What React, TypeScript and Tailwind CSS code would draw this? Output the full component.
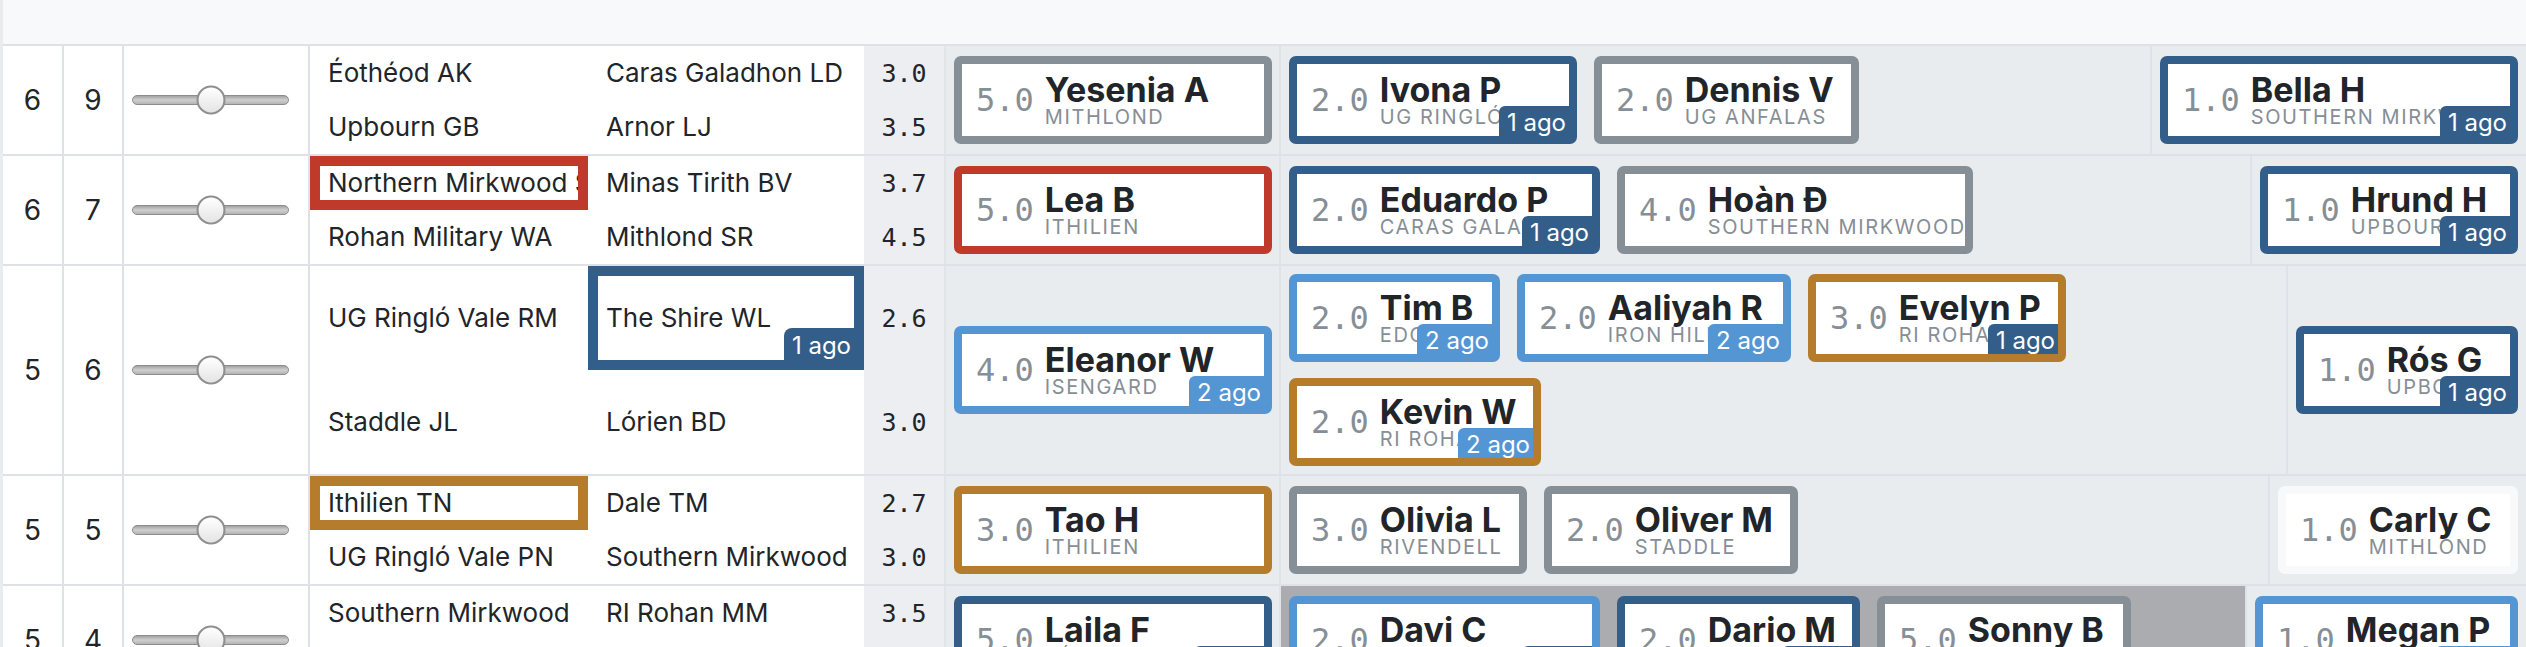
import clsx from 'clsx'

// ── types ─────────────────────────────────────────────────────────────────────

type Tone = 'gray' | 'navy' | 'sky' | 'red' | 'gold' | 'ghost'

interface Pick {
  score: string
  name: string
  sub: string
  tone: Tone
  w?: string          // fixed card width (cards in the first column stretch)
  ago?: 1 | 2
}

interface Line {
  n1: string
  n2: string
  rating: string
  n1Tone?: Tone
  n2Tone?: Tone
  n2Ago?: 1 | 2
}

interface Row {
  a: string
  b: string
  lines: [Line, Line]
  first: Pick
  mid: Pick[]
  last: Pick
  dim?: boolean
}

// ── styles ────────────────────────────────────────────────────────────────────

const BORDER: Record<Tone, string> = {
  gray: 'border-[#868e96]',
  navy: 'border-[#335e8a]',
  sky: 'border-[#5496d4]',
  red: 'border-[#c03a2b]',
  gold: 'border-[#b57c2c]',
  ghost: 'border-[#f8f9fa]',
}

const AGO_BG: Record<1 | 2, string> = {
  1: 'bg-[#335e8a]',
  2: 'bg-[#5496d4]',
}

const MONO = "font-['DejaVu_Sans_Mono',monospace]"
const DIVIDER = 'border-[#dee2e6]'

// ── data ──────────────────────────────────────────────────────────────────────

const ROWS: Row[] = [
  {
    a: '6', b: '9',
    lines: [
      { n1: 'Éothéod AK', n2: 'Caras Galadhon LD', rating: '3.0' },
      { n1: 'Upbourn GB', n2: 'Arnor LJ', rating: '3.5' },
    ],
    first: { score: '5.0', name: 'Yesenia A', sub: 'Mithlond', tone: 'gray' },
    mid: [
      { score: '2.0', name: 'Ivona P', sub: 'UG Ringló Vale', tone: 'navy', w: 'w-[288px]', ago: 1 },
      { score: '2.0', name: 'Dennis V', sub: 'UG Anfalas', tone: 'gray', w: 'w-[265px]' },
    ],
    last: { score: '1.0', name: 'Bella H', sub: 'Southern Mirkwood', tone: 'navy', w: 'w-[358px]', ago: 1 },
  },
  {
    a: '6', b: '7',
    lines: [
      { n1: 'Northern Mirkwood SA', n2: 'Minas Tirith BV', rating: '3.7', n1Tone: 'red' },
      { n1: 'Rohan Military WA', n2: 'Mithlond SR', rating: '4.5' },
    ],
    first: { score: '5.0', name: 'Lea B', sub: 'Ithilien', tone: 'red' },
    mid: [
      { score: '2.0', name: 'Eduardo P', sub: 'Caras Galadhon', tone: 'navy', w: 'w-[311px]', ago: 1 },
      { score: '4.0', name: 'Hoàn Đ', sub: 'Southern Mirkwood', tone: 'gray', w: 'w-[356px]' },
    ],
    last: { score: '1.0', name: 'Hrund H', sub: 'Upbourn', tone: 'navy', w: 'w-[258px]', ago: 1 },
  },
  {
    a: '5', b: '6',
    lines: [
      { n1: 'UG Ringló Vale RM', n2: 'The Shire WL', rating: '2.6', n2Tone: 'navy', n2Ago: 1 },
      { n1: 'Staddle JL', n2: 'Lórien BD', rating: '3.0' },
    ],
    first: { score: '4.0', name: 'Eleanor W', sub: 'Isengard', tone: 'sky', ago: 2 },
    mid: [
      { score: '2.0', name: 'Tim B', sub: 'Edoras', tone: 'sky', w: 'w-[211px]', ago: 2 },
      { score: '2.0', name: 'Aaliyah R', sub: 'Iron Hills', tone: 'sky', w: 'w-[274px]', ago: 2 },
      { score: '3.0', name: 'Evelyn P', sub: 'RI Rohan', tone: 'gold', w: 'w-[258px]', ago: 1 },
      { score: '2.0', name: 'Kevin W', sub: 'RI Rohan', tone: 'gold', w: 'w-[252px]', ago: 2 },
    ],
    last: { score: '1.0', name: 'Rós G', sub: 'Upbourn', tone: 'navy', w: 'w-[222px]', ago: 1 },
  },
  {
    a: '5', b: '5',
    lines: [
      { n1: 'Ithilien TN', n2: 'Dale TM', rating: '2.7', n1Tone: 'gold' },
      { n1: 'UG Ringló Vale PN', n2: 'Southern Mirkwood IK', rating: '3.0' },
    ],
    first: { score: '3.0', name: 'Tao H', sub: 'Ithilien', tone: 'gold' },
    mid: [
      { score: '3.0', name: 'Olivia L', sub: 'Rivendell', tone: 'gray', w: 'w-[238px]' },
      { score: '2.0', name: 'Oliver M', sub: 'Staddle', tone: 'gray', w: 'w-[254px]' },
    ],
    last: { score: '1.0', name: 'Carly C', sub: 'Mithlond', tone: 'ghost', w: 'w-[240px]' },
  },
  {
    a: '5', b: '4',
    lines: [
      { n1: 'Southern Mirkwood TR', n2: 'RI Rohan MM', rating: '3.5' },
      { n1: 'Rivendell KO', n2: 'Dale PR', rating: '3.2' },
    ],
    first: { score: '5.0', name: 'Laila F', sub: 'Lórien', tone: 'navy', ago: 1 },
    mid: [
      { score: '2.0', name: 'Davi C', sub: 'Caras Galadhon', tone: 'sky', w: 'w-[311px]', ago: 1 },
      { score: '2.0', name: 'Dario M', sub: 'Dale', tone: 'navy', w: 'w-[243px]', ago: 1 },
      { score: '5.0', name: 'Sonny B', sub: 'Mithlond', tone: 'gray', w: 'w-[254px]' },
    ],
    last: { score: '1.0', name: 'Megan P', sub: 'Edoras', tone: 'sky', w: 'w-[263px]', ago: 2 },
    dim: true,
  },
]

// ── pieces ────────────────────────────────────────────────────────────────────

function AgoBadge({ ago, className }: { ago: 1 | 2; className?: string }) {
  return (
    <span
      className={clsx(
        'absolute bottom-0 right-0 h-[30px] pl-[8px] pr-[3px] text-[24px] leading-[34px] text-white whitespace-nowrap',
        AGO_BG[ago],
        className,
      )}
    >
      {ago} ago
    </span>
  )
}

function PickCard({ p }: { p: Pick }) {
  return (
    <div className={clsx('shrink-0 rounded-[7px] border-8 bg-white', BORDER[p.tone], p.w ?? 'w-full')}>
      <div className="relative flex h-[72px] items-center overflow-hidden pl-[14px] pr-[15px]">
        <span className={`${MONO} shrink-0 text-[32px] leading-none text-[#868e96]`}>{p.score}</span>
        <div className="ml-[11px] min-w-0">
          <div className="whitespace-nowrap text-[34px] font-bold leading-[34px] text-[#212529]">{p.name}</div>
          <div className="whitespace-nowrap text-[20px] uppercase leading-[20px] tracking-[0.08em] text-[#868e96]">
            {p.sub}
          </div>
        </div>
        {p.ago && <AgoBadge ago={p.ago} className="rounded-tl-[6px]" />}
      </div>
    </div>
  )
}

function NameCell({ text, tone, ago, width }: { text: string; tone?: Tone; ago?: 1 | 2; width: string }) {
  return (
    <div
      className={clsx(
        'relative flex shrink-0 items-center overflow-hidden whitespace-nowrap border-[10px] px-2 text-[26px] leading-[30px] text-[#212529]',
        width,
        tone ? BORDER[tone] : 'border-transparent',
      )}
    >
      {text}
      {ago && <AgoBadge ago={ago} className="h-[32px] rounded-tl-[8px] leading-[36px]" />}
    </div>
  )
}

function Slider() {
  return (
    <div className="relative h-[10px] w-[157px] rounded-full border border-[#8c8c8c] bg-linear-to-b from-[#a3a3a3] via-[#cfcfcf] to-[#b4b4b4]">
      <div className="absolute left-1/2 top-1/2 h-[29px] w-[29px] -translate-x-1/2 -translate-y-1/2 rounded-full border-2 border-[#8f8f8f] bg-linear-to-b from-white to-[#e4e4e4]" />
    </div>
  )
}

function BoardRow({ row }: { row: Row }) {
  return (
    <div className={`flex border-b-2 ${DIVIDER}`}>
      {/* left table */}
      <div className="flex shrink-0 bg-white">
        <div className={`flex w-[61px] items-center justify-center border-r-2 ${DIVIDER} text-[28px] leading-none text-[#212529]`}>
          {row.a}
        </div>
        <div className={`flex w-[60px] items-center justify-center border-r-2 ${DIVIDER} text-[28px] leading-none text-[#212529]`}>
          {row.b}
        </div>
        <div className={`flex w-[186px] items-center border-r-2 ${DIVIDER} pl-2`}>
          <Slider />
        </div>
        <div className="flex flex-col">
          {row.lines.map((l, i) => (
            <div key={i} className="flex min-h-[54px] flex-1">
              <NameCell text={l.n1} tone={l.n1Tone} width="w-[278px]" />
              <NameCell text={l.n2} tone={l.n2Tone} ago={l.n2Ago} width="w-[276px]" />
              <div
                className={`${MONO} flex w-[82px] shrink-0 items-center justify-center border-r-2 border-[#e2e5e8] bg-[#eceef1] text-[25px] leading-none text-[#212529]`}
              >
                {l.rating}
              </div>
            </div>
          ))}
        </div>
      </div>

      {/* picks */}
      <div className="flex min-w-0 flex-1 bg-[#e9ecef]">
        <div className="flex w-[335px] shrink-0 items-center border-r-2 border-[#dfe2e6] pl-2 pr-[7px]">
          <PickCard p={row.first} />
        </div>
        <div
          className={clsx(
            'flex min-w-0 flex-1 flex-wrap content-center items-center gap-x-[17px] gap-y-4 p-2',
            row.dim && 'bg-[#aaacaf]',
          )}
        >
          {row.mid.map(p => <PickCard key={p.name} p={p} />)}
        </div>
        <div className="flex shrink-0 items-center border-l-2 border-[#dfe2e6] px-2">
          <PickCard p={row.last} />
        </div>
      </div>
    </div>
  )
}

// ── App ───────────────────────────────────────────────────────────────────────

export default function App() {
  return (
    <div className="min-h-screen overflow-hidden border-l-[3px] border-[#e9ecef] bg-white font-['Inter',sans-serif]">
      <div className={`h-[46px] border-b-2 ${DIVIDER} bg-[#f8f9fa]`} />
      {ROWS.map((r, i) => <BoardRow key={i} row={r} />)}
    </div>
  )
}
